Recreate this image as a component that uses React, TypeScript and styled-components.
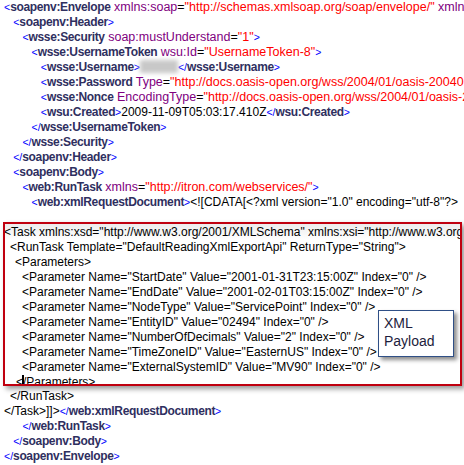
import React from 'react';
import styled, { createGlobalStyle } from 'styled-components';

const GlobalStyle = createGlobalStyle`
  html, body {
    margin: 0;
    padding: 0;
    background: #ffffff;
  }
`;

const Page = styled.div`
  width: 464px;
  height: 465px;
  overflow: hidden;
  background: #ffffff;
  font-family: 'Liberation Sans', Arial, sans-serif;
  font-size: 12.5px;
  color: #000000;
`;

const Line = styled.div<{ $indent: number }>`
  height: 15px;
  line-height: 15px;
  white-space: nowrap;
  padding-left: ${({ $indent }) => 4 + $indent * 9.2}px;
`;

const Br = styled.span`
  color: #0000ff;
  font-size: 10.5px;
`;

const Tag = styled.span`
  color: #2f2f60;
  font-weight: 700;
  font-size: 12px;
  letter-spacing: -0.35px;
`;

const Attr = styled.span`
  color: #800080;
`;

const Val = styled.span`
  color: #ff0000;
`;

const Plain = styled.span`
  color: #000000;
  font-size: 12px;
`;

const Blurred = styled.span`
  display: inline-block;
  width: 38px;
  height: 13px;
  vertical-align: -2px;
  background: #c8c8c8;
  filter: blur(2px);
`;

const PayloadBox = styled.div`
  position: relative;
  margin: 12px 2px 0 3px;
  height: 164px;
  box-sizing: border-box;
  border: 2px solid #c0000f;
  overflow: hidden;
  background: linear-gradient(#ececec, #ffffff 16px);
  box-shadow: 3px 3px 5px rgba(0, 0, 0, 0.4);
  font-size: 12px;
`;

const PayloadLine = styled.div<{ $indent: number }>`
  height: 15px;
  line-height: 15px;
  white-space: nowrap;
  padding-left: ${({ $indent }) => $indent}px;
  color: #000000;
  &:first-child {
    margin-top: 1px;
    margin-left: -1px;
  }
`;

const Caret = styled.span`
  display: inline-block;
  width: 0;
  height: 14px;
  border-left: 2px solid #000000;
  margin: 0 -1px 0 -1px;
  vertical-align: -3px;
`;

const Callout = styled.div`
  position: absolute;
  left: 373px;
  top: 86px;
  width: 76px;
  height: 47px;
  box-sizing: border-box;
  padding: 3px 0 0 5px;
  background: #ffffff;
  border: 1px solid #2f4f86;
  box-shadow: 3px 3px 4px rgba(0, 0, 0, 0.45);
  color: #1c1c3c;
  font-size: 14px;
  line-height: 18px;
`;

const AfterBox = styled.div`
  margin-top: 3px;
`;

const Open = ({ name }: { name: string }) => (
  <>
    <Br>&lt;</Br>
    <Tag>{name}</Tag>
  </>
);

const Close = ({ name }: { name: string }) => (
  <>
    <Br>&lt;/</Br>
    <Tag>{name}</Tag>
    <Br>&gt;</Br>
  </>
);

const End = () => <Br>&gt;</Br>;

const params: [string, string][] = [
  ['StartDate', '2001-01-31T23:15:00Z'],
  ['EndDate', '2001-02-01T03:15:00Z'],
  ['NodeType', 'ServicePoint'],
  ['EntityID', '02494'],
  ['NumberOfDecimals', '2'],
  ['TimeZoneID', 'EasternUS'],
  ['ExternalSystemID', 'MV90'],
];

export default function App() {
  return (
    <Page>
      <GlobalStyle />
      <Line $indent={0}>
        <Open name="soapenv:Envelope" /> <Attr>xmlns:soap</Attr>=
        <Val>"http://schemas.xmlsoap.org/soap/envelope/"</Val> <Attr>xmlns:wsse</Attr>=
        <Val>"http://docs.oasis-open.org"</Val>
      </Line>
      <Line $indent={1}>
        <Open name="soapenv:Header" />
        <End />
      </Line>
      <Line $indent={2}>
        <Open name="wsse:Security" /> <Attr>soap:mustUnderstand</Attr>=<Val>"1"</Val>
        <End />
      </Line>
      <Line $indent={3}>
        <Open name="wsse:UsernameToken" /> <Attr>wsu:Id</Attr>=<Val>"UsernameToken-8"</Val>
        <End />
      </Line>
      <Line $indent={4}>
        <Open name="wsse:Username" />
        <End />
        <Blurred />
        <Close name="wsse:Username" />
      </Line>
      <Line $indent={4}>
        <Open name="wsse:Password" /> <Attr>Type</Attr>=
        <Val>"http://docs.oasis-open.org/wss/2004/01/oasis-200401-wss-username-token-profile-1.0#PasswordText"</Val>
      </Line>
      <Line $indent={4}>
        <Open name="wsse:Nonce" /> <Attr>EncodingType</Attr>=
        <Val>"http://docs.oasis-open.org/wss/2004/01/oasis-200401-wss-soap-message-security-1.0#Base64Binary"</Val>
      </Line>
      <Line $indent={4}>
        <Open name="wsu:Created" />
        <End />
        <Plain>2009-11-09T05:03:17.410Z</Plain>
        <Close name="wsu:Created" />
      </Line>
      <Line $indent={3}>
        <Close name="wsse:UsernameToken" />
      </Line>
      <Line $indent={2}>
        <Close name="wsse:Security" />
      </Line>
      <Line $indent={1}>
        <Close name="soapenv:Header" />
      </Line>
      <Line $indent={1}>
        <Open name="soapenv:Body" />
        <End />
      </Line>
      <Line $indent={2}>
        <Open name="web:RunTask" /> <Attr>xmlns</Attr>=<Val>"http://itron.com/webservices/"</Val>
        <End />
      </Line>
      <Line $indent={3}>
        <Open name="web:xmlRequestDocument" />
        <End />
        <Plain>&lt;![CDATA[&lt;?xml version="1.0" encoding="utf-8"?&gt;</Plain>
      </Line>

      <PayloadBox>
        <PayloadLine $indent={0}>
          &lt;Task xmlns:xsd="http://www.w3.org/2001/XMLSchema" xmlns:xsi="http://www.w3.org/2001/XMLSchema-instance"&gt;
        </PayloadLine>
        <PayloadLine $indent={5}>
          &lt;RunTask Template="DefaultReadingXmlExportApi" ReturnType="String"&gt;
        </PayloadLine>
        <PayloadLine $indent={10}>&lt;Parameters&gt;</PayloadLine>
        {params.map(([name, value]) => (
          <PayloadLine key={name} $indent={17}>
            &lt;Parameter Name="{name}" Value="{value}" Index="0" /&gt;
          </PayloadLine>
        ))}
        <PayloadLine $indent={11}>
          &lt;
          <Caret />
          /Parameters&gt;
        </PayloadLine>
        <Callout>
          XML
          <br />
          Payload
        </Callout>
      </PayloadBox>

      <AfterBox>
        <Line $indent={0.65}>
          <Plain>&lt;/RunTask&gt;</Plain>
        </Line>
        <Line $indent={0}>
          <Plain>&lt;/Task&gt;]]&gt;</Plain>
          <Close name="web:xmlRequestDocument" />
        </Line>
        <Line $indent={2}>
          <Close name="web:RunTask" />
        </Line>
        <Line $indent={1}>
          <Close name="soapenv:Body" />
        </Line>
        <Line $indent={0}>
          <Close name="soapenv:Envelope" />
        </Line>
      </AfterBox>
    </Page>
  );
}
